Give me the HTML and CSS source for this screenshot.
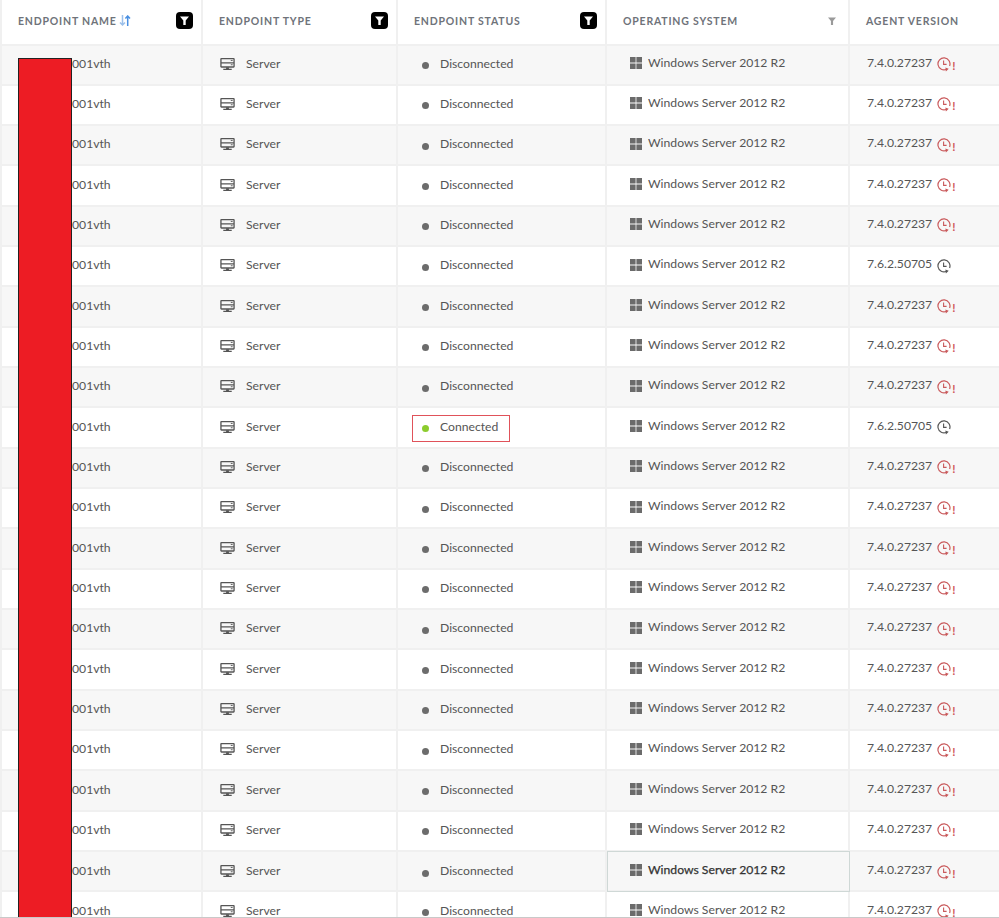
FILE: index.html
```html
<!DOCTYPE html>
<html lang="en">
<head>
<meta charset="utf-8">
<title>Endpoints</title>
<link rel="stylesheet" href="styles.css">
</head>
<body>
<svg class="defs" width="0" height="0" aria-hidden="true">
  <symbol id="funnel" viewBox="0 0 9 9"><path d="M0 0.5h9L5.7 4.4V9H3.3V4.4z"/></symbol>
  <symbol id="server" viewBox="0 0 16 14"><path d="M1.5 1.2h13a.5.5 0 0 1 .5.5v8a.5.5 0 0 1-.5.5h-13a.5.5 0 0 1-.5-.5v-8a.5.5 0 0 1 .5-.5zM1 5.7h14" fill="none" stroke="#555" stroke-width="1.4"/><path d="M6.5 10.5h3v1.5h-3zM3.5 12h9v1.3h-9z" fill="#555"/><path d="M11.5 3.2h2M11.5 7.8h2" stroke="#555" stroke-width="1"/></symbol>
  <symbol id="win" viewBox="0 0 12 12"><path d="M0 0h5.6v5.6H0zM6.4 0H12v5.6H6.4zM0 6.4h5.6V12H0zM6.4 6.4H12V12H6.4z" fill="#6b6b6b"/></symbol>
  <symbol id="clock" viewBox="0 0 14 15"><path d="M9.6 12.3A6 6 0 1 1 12.6 9" fill="none" stroke="currentColor" stroke-width="1.2"/><path d="M6.6 3.6v3.8h3" fill="none" stroke="currentColor" stroke-width="1.1"/><path d="M8.4 10.4l.5 4 2.8-2.6z" fill="currentColor"/></symbol>
</svg>
<main class="table">
  <div class="row head">
    <div class="cell"><span class="label">Endpoint Name</span><svg class="sort" viewBox="0 0 12 11" width="12" height="11"><path d="M3.5 0v10M1 7.5L3.5 10 6 7.5" fill="none" stroke="#9cc0ea" stroke-width="1.5"/><path d="M8.7 11V1M6.4 3.5L8.7 1 11 3.5" fill="none" stroke="#4a90e2" stroke-width="1.5"/></svg><span class="filter"><svg width="9" height="9"><use href="#funnel"/></svg></span></div>
    <div class="cell"><span class="label">Endpoint Type</span><span class="filter"><svg width="9" height="9"><use href="#funnel"/></svg></span></div>
    <div class="cell"><span class="label">Endpoint Status</span><span class="filter"><svg width="9" height="9"><use href="#funnel"/></svg></span></div>
    <div class="cell"><span class="label">Operating System</span><span class="filter plain"><svg width="8" height="8"><use href="#funnel"/></svg></span></div>
    <div class="cell"><span class="label">Agent Version</span></div>
  </div>
  <div class="row"><div class="cell name">001vth</div><div class="cell type"><svg class="ic-server"><use href="#server"/></svg>Server</div><div class="cell"><div class="status"><i class="dot"></i>Disconnected</div></div><div class="cell os"><svg class="ic-win"><use href="#win"/></svg>Windows Server 2012 R2</div><div class="cell ver">7.4.0.27237<svg class="ic-clock warn"><use href="#clock"/></svg><b class="bang">!</b></div></div>
  <div class="row"><div class="cell name">001vth</div><div class="cell type"><svg class="ic-server"><use href="#server"/></svg>Server</div><div class="cell"><div class="status"><i class="dot"></i>Disconnected</div></div><div class="cell os"><svg class="ic-win"><use href="#win"/></svg>Windows Server 2012 R2</div><div class="cell ver">7.4.0.27237<svg class="ic-clock warn"><use href="#clock"/></svg><b class="bang">!</b></div></div>
  <div class="row"><div class="cell name">001vth</div><div class="cell type"><svg class="ic-server"><use href="#server"/></svg>Server</div><div class="cell"><div class="status"><i class="dot"></i>Disconnected</div></div><div class="cell os"><svg class="ic-win"><use href="#win"/></svg>Windows Server 2012 R2</div><div class="cell ver">7.4.0.27237<svg class="ic-clock warn"><use href="#clock"/></svg><b class="bang">!</b></div></div>
  <div class="row"><div class="cell name">001vth</div><div class="cell type"><svg class="ic-server"><use href="#server"/></svg>Server</div><div class="cell"><div class="status"><i class="dot"></i>Disconnected</div></div><div class="cell os"><svg class="ic-win"><use href="#win"/></svg>Windows Server 2012 R2</div><div class="cell ver">7.4.0.27237<svg class="ic-clock warn"><use href="#clock"/></svg><b class="bang">!</b></div></div>
  <div class="row"><div class="cell name">001vth</div><div class="cell type"><svg class="ic-server"><use href="#server"/></svg>Server</div><div class="cell"><div class="status"><i class="dot"></i>Disconnected</div></div><div class="cell os"><svg class="ic-win"><use href="#win"/></svg>Windows Server 2012 R2</div><div class="cell ver">7.4.0.27237<svg class="ic-clock warn"><use href="#clock"/></svg><b class="bang">!</b></div></div>
  <div class="row"><div class="cell name">001vth</div><div class="cell type"><svg class="ic-server"><use href="#server"/></svg>Server</div><div class="cell"><div class="status"><i class="dot"></i>Disconnected</div></div><div class="cell os"><svg class="ic-win"><use href="#win"/></svg>Windows Server 2012 R2</div><div class="cell ver">7.6.2.50705<svg class="ic-clock"><use href="#clock"/></svg></div></div>
  <div class="row"><div class="cell name">001vth</div><div class="cell type"><svg class="ic-server"><use href="#server"/></svg>Server</div><div class="cell"><div class="status"><i class="dot"></i>Disconnected</div></div><div class="cell os"><svg class="ic-win"><use href="#win"/></svg>Windows Server 2012 R2</div><div class="cell ver">7.4.0.27237<svg class="ic-clock warn"><use href="#clock"/></svg><b class="bang">!</b></div></div>
  <div class="row"><div class="cell name">001vth</div><div class="cell type"><svg class="ic-server"><use href="#server"/></svg>Server</div><div class="cell"><div class="status"><i class="dot"></i>Disconnected</div></div><div class="cell os"><svg class="ic-win"><use href="#win"/></svg>Windows Server 2012 R2</div><div class="cell ver">7.4.0.27237<svg class="ic-clock warn"><use href="#clock"/></svg><b class="bang">!</b></div></div>
  <div class="row"><div class="cell name">001vth</div><div class="cell type"><svg class="ic-server"><use href="#server"/></svg>Server</div><div class="cell"><div class="status"><i class="dot"></i>Disconnected</div></div><div class="cell os"><svg class="ic-win"><use href="#win"/></svg>Windows Server 2012 R2</div><div class="cell ver">7.4.0.27237<svg class="ic-clock warn"><use href="#clock"/></svg><b class="bang">!</b></div></div>
  <div class="row"><div class="cell name">001vth</div><div class="cell type"><svg class="ic-server"><use href="#server"/></svg>Server</div><div class="cell"><div class="status marked"><i class="dot on"></i>Connected</div></div><div class="cell os"><svg class="ic-win"><use href="#win"/></svg>Windows Server 2012 R2</div><div class="cell ver">7.6.2.50705<svg class="ic-clock"><use href="#clock"/></svg></div></div>
  <div class="row"><div class="cell name">001vth</div><div class="cell type"><svg class="ic-server"><use href="#server"/></svg>Server</div><div class="cell"><div class="status"><i class="dot"></i>Disconnected</div></div><div class="cell os"><svg class="ic-win"><use href="#win"/></svg>Windows Server 2012 R2</div><div class="cell ver">7.4.0.27237<svg class="ic-clock warn"><use href="#clock"/></svg><b class="bang">!</b></div></div>
  <div class="row"><div class="cell name">001vth</div><div class="cell type"><svg class="ic-server"><use href="#server"/></svg>Server</div><div class="cell"><div class="status"><i class="dot"></i>Disconnected</div></div><div class="cell os"><svg class="ic-win"><use href="#win"/></svg>Windows Server 2012 R2</div><div class="cell ver">7.4.0.27237<svg class="ic-clock warn"><use href="#clock"/></svg><b class="bang">!</b></div></div>
  <div class="row"><div class="cell name">001vth</div><div class="cell type"><svg class="ic-server"><use href="#server"/></svg>Server</div><div class="cell"><div class="status"><i class="dot"></i>Disconnected</div></div><div class="cell os"><svg class="ic-win"><use href="#win"/></svg>Windows Server 2012 R2</div><div class="cell ver">7.4.0.27237<svg class="ic-clock warn"><use href="#clock"/></svg><b class="bang">!</b></div></div>
  <div class="row"><div class="cell name">001vth</div><div class="cell type"><svg class="ic-server"><use href="#server"/></svg>Server</div><div class="cell"><div class="status"><i class="dot"></i>Disconnected</div></div><div class="cell os"><svg class="ic-win"><use href="#win"/></svg>Windows Server 2012 R2</div><div class="cell ver">7.4.0.27237<svg class="ic-clock warn"><use href="#clock"/></svg><b class="bang">!</b></div></div>
  <div class="row"><div class="cell name">001vth</div><div class="cell type"><svg class="ic-server"><use href="#server"/></svg>Server</div><div class="cell"><div class="status"><i class="dot"></i>Disconnected</div></div><div class="cell os"><svg class="ic-win"><use href="#win"/></svg>Windows Server 2012 R2</div><div class="cell ver">7.4.0.27237<svg class="ic-clock warn"><use href="#clock"/></svg><b class="bang">!</b></div></div>
  <div class="row"><div class="cell name">001vth</div><div class="cell type"><svg class="ic-server"><use href="#server"/></svg>Server</div><div class="cell"><div class="status"><i class="dot"></i>Disconnected</div></div><div class="cell os"><svg class="ic-win"><use href="#win"/></svg>Windows Server 2012 R2</div><div class="cell ver">7.4.0.27237<svg class="ic-clock warn"><use href="#clock"/></svg><b class="bang">!</b></div></div>
  <div class="row"><div class="cell name">001vth</div><div class="cell type"><svg class="ic-server"><use href="#server"/></svg>Server</div><div class="cell"><div class="status"><i class="dot"></i>Disconnected</div></div><div class="cell os"><svg class="ic-win"><use href="#win"/></svg>Windows Server 2012 R2</div><div class="cell ver">7.4.0.27237<svg class="ic-clock warn"><use href="#clock"/></svg><b class="bang">!</b></div></div>
  <div class="row"><div class="cell name">001vth</div><div class="cell type"><svg class="ic-server"><use href="#server"/></svg>Server</div><div class="cell"><div class="status"><i class="dot"></i>Disconnected</div></div><div class="cell os"><svg class="ic-win"><use href="#win"/></svg>Windows Server 2012 R2</div><div class="cell ver">7.4.0.27237<svg class="ic-clock warn"><use href="#clock"/></svg><b class="bang">!</b></div></div>
  <div class="row"><div class="cell name">001vth</div><div class="cell type"><svg class="ic-server"><use href="#server"/></svg>Server</div><div class="cell"><div class="status"><i class="dot"></i>Disconnected</div></div><div class="cell os"><svg class="ic-win"><use href="#win"/></svg>Windows Server 2012 R2</div><div class="cell ver">7.4.0.27237<svg class="ic-clock warn"><use href="#clock"/></svg><b class="bang">!</b></div></div>
  <div class="row"><div class="cell name">001vth</div><div class="cell type"><svg class="ic-server"><use href="#server"/></svg>Server</div><div class="cell"><div class="status"><i class="dot"></i>Disconnected</div></div><div class="cell os"><svg class="ic-win"><use href="#win"/></svg>Windows Server 2012 R2</div><div class="cell ver">7.4.0.27237<svg class="ic-clock warn"><use href="#clock"/></svg><b class="bang">!</b></div></div>
  <div class="row"><div class="cell name">001vth</div><div class="cell type"><svg class="ic-server"><use href="#server"/></svg>Server</div><div class="cell"><div class="status"><i class="dot"></i>Disconnected</div></div><div class="cell os selected"><svg class="ic-win"><use href="#win"/></svg>Windows Server 2012 R2</div><div class="cell ver">7.4.0.27237<svg class="ic-clock warn"><use href="#clock"/></svg><b class="bang">!</b></div></div>
  <div class="row"><div class="cell name">001vth</div><div class="cell type"><svg class="ic-server"><use href="#server"/></svg>Server</div><div class="cell"><div class="status"><i class="dot"></i>Disconnected</div></div><div class="cell os"><svg class="ic-win"><use href="#win"/></svg>Windows Server 2012 R2</div><div class="cell ver">7.4.0.27237<svg class="ic-clock warn"><use href="#clock"/></svg><b class="bang">!</b></div></div>
  <div class="redact"></div>
</main>
</body>
</html>
```
FILE: styles.css
```css
html, body {
  margin: 0;
  padding: 0;
  background: #fff;
}
body {
  font-family: Lato, "Open Sans", sans-serif;
  font-size: 12.2px;
  color: #555;
  overflow: hidden;
}
.defs {
  position: absolute;
}
.table {
  position: relative;
  box-sizing: border-box;
  height: 918px;
  overflow: hidden;
  border-bottom: 1px solid #c9c9c9;
}
.row {
  display: grid;
  grid-template-columns: 203px 195px 209px 243px 149px;
  box-sizing: border-box;
  height: 40.33px;
  border-bottom: 2px solid #f0f0f0;
}
.row:nth-child(even) {
  background: #f7f7f7;
}
.head {
  height: 45.5px;
  background: #fff;
}
.cell {
  display: flex;
  align-items: center;
  box-sizing: border-box;
  min-width: 0;
  border-right: 2px solid #f0f0f0;
  white-space: nowrap;
  position: relative;
}
.cell:first-child {
  border-left: 2px solid #f0f0f0;
}
.cell:last-child {
  border-right: 0;
}
.head .cell {
  padding: 0 8px 2px 16px;
}
.label {
  font-size: 10.5px;
  font-weight: 700;
  letter-spacing: 0.8px;
  text-transform: uppercase;
  color: #6f737a;
}
.sort {
  margin-left: 2px;
}
.filter {
  margin-left: auto;
  width: 17px;
  height: 17px;
  display: flex;
  align-items: center;
  justify-content: center;
  background: #000;
  border-radius: 4px;
  fill: #fff;
}
.filter.plain {
  background: transparent;
  fill: #9a9a9a;
}
.name {
  padding-left: 70px;
  padding-bottom: 3px;
}
.type {
  padding-left: 17px;
  padding-bottom: 3px;
}
.ic-server {
  width: 15px;
  height: 14px;
  margin: 1px 11px 0 0;
}
.status {
  display: flex;
  align-items: center;
  box-sizing: border-box;
  width: 98px;
  height: 27px;
  margin: 1px 0 0 14px;
  padding: 0 0 4px 9px;
  border: 1px solid transparent;
}
.marked {
  border-color: #e0525a;
}
.dot {
  flex-shrink: 0;
  width: 7px;
  height: 7px;
  border-radius: 50%;
  background: #6c6c6c;
  margin: 5px 11px 0 0;
}
.dot.on {
  background: #8ccc2e;
}
.os {
  padding-left: 23px;
  padding-bottom: 5px;
}
.ic-win {
  width: 12px;
  height: 12px;
  margin: 2px 6px 0 0;
}
.selected {
  color: #333;
  -webkit-text-stroke: 0.25px #333;
  border: 1px solid #cfd8d6;
  margin-top: -1px;
  height: 41px;
  padding-left: 22px;
}
.ver {
  padding-left: 17px;
  padding-bottom: 5px;
}
.ic-clock {
  width: 14px;
  height: 15px;
  margin: 5px 0 0 5px;
  color: #555;
}
.ic-clock.warn {
  color: #c9595b;
}
.bang {
  color: #d0585a;
  font-size: 11.5px;
  margin: 7px 0 0 1px;
}
.redact {
  position: absolute;
  left: 18px;
  top: 58px;
  width: 54px;
  height: 870px;
  box-sizing: border-box;
  background: #ed1c24;
  border: 1px solid #222;
}
```
